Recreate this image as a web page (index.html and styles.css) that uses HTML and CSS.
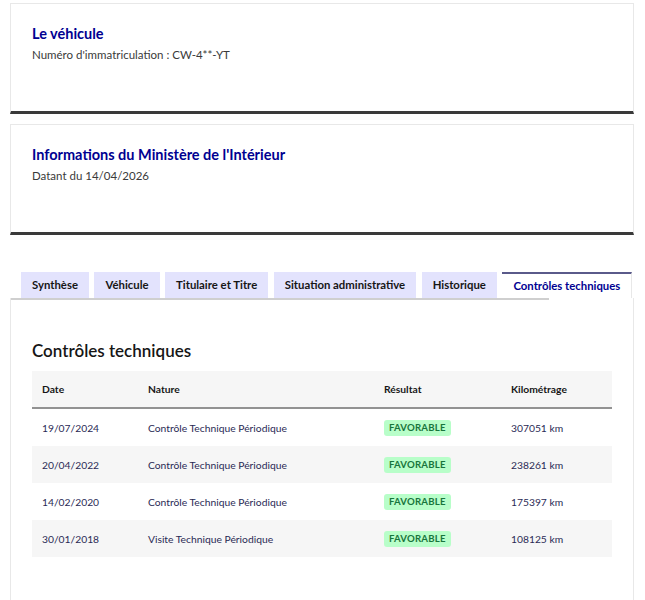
FILE: index.html
```html
<!DOCTYPE html>
<html lang="fr">
<head>
    <meta charset="UTF-8">
    <meta name="viewport" content="width=device-width, initial-scale=1.0">
    <title>Historique du véhicule</title>
    <link rel="stylesheet" href="styles.css">
</head>
<body>
    <div class="card">
        <h2 class="card-title">Le véhicule</h2>
        <p class="card-text">Numéro d'immatriculation : CW-4**-YT</p>
    </div>

    <div class="card">
        <h2 class="card-title">Informations du Ministère de l'Intérieur</h2>
        <p class="card-text">Datant du 14/04/2026</p>
    </div>

    <div class="tabs">
        <ul class="tab-list">
            <li class="tab">Synthèse</li>
            <li class="tab">Véhicule</li>
            <li class="tab">Titulaire et Titre</li>
            <li class="tab">Situation administrative</li>
            <li class="tab">Historique</li>
            <li class="tab active">Contrôles techniques</li>
        </ul>
        <div class="tab-line"></div>

        <div class="tab-panel">
            <h3 class="panel-title">Contrôles techniques</h3>
            <table class="ct-table">
                <thead>
                    <tr>
                        <th class="col-date">Date</th>
                        <th class="col-nature">Nature</th>
                        <th class="col-result">Résultat</th>
                        <th>Kilométrage</th>
                    </tr>
                </thead>
                <tbody>
                    <tr>
                        <td>19/07/2024</td>
                        <td>Contrôle Technique Périodique</td>
                        <td><span class="badge">Favorable</span></td>
                        <td>307051 km</td>
                    </tr>
                    <tr>
                        <td>20/04/2022</td>
                        <td>Contrôle Technique Périodique</td>
                        <td><span class="badge">Favorable</span></td>
                        <td>238261 km</td>
                    </tr>
                    <tr>
                        <td>14/02/2020</td>
                        <td>Contrôle Technique Périodique</td>
                        <td><span class="badge">Favorable</span></td>
                        <td>175397 km</td>
                    </tr>
                    <tr>
                        <td>30/01/2018</td>
                        <td>Visite Technique Périodique</td>
                        <td><span class="badge">Favorable</span></td>
                        <td>108125 km</td>
                    </tr>
                </tbody>
            </table>
        </div>
    </div>
</body>
</html>
```

FILE: styles.css
```css
body {
    font-family: Lato, "Noto Sans", sans-serif;
    margin: 0;
    padding: 3px 11px 0 10px;
    color: #3a3a3a;
    background-color: #fff;
}
.card {
    border: 1px solid #e8e8e8;
    border-bottom: 3px solid #3a3a3a;
    height: 111px;
    box-sizing: border-box;
    padding: 21px 21px 0;
    margin-bottom: 10px;
}
.card-title {
    margin: 0;
    font-size: 14.5px;
    font-weight: bold;
    color: #000091;
}
.card-text {
    margin: 6px 0 0;
    font-size: 11.5px;
    color: #3a3a3a;
}
.tabs {
    margin-top: 37px;
}
.tab-list {
    list-style: none;
    margin: 0;
    padding: 0 0 0 11px;
    display: flex;
    gap: 5.5px;
}
.tab {
    flex: none;
    white-space: nowrap;
    box-sizing: border-box;
    background-color: #e3e3fd;
    color: #161616;
    font-size: 11.35px;
    font-weight: bold;
    padding: 0 11px;
    height: 26px;
    line-height: 26px;
}
.tab.active {
    background-color: #fff;
    color: #000091;
    border-top: 2px solid #5a5a8a;
    border-right: 1px solid #e8e8e8;
    line-height: 24px;
}
.tab-line {
    width: 539px;
    height: 2px;
    background-color: #cfcfcf;
}
.tab-panel {
    border: 1px solid #e8e8e8;
    border-top: none;
    padding: 42px 21px 60px;
    margin-top: -2px;
}
.panel-title {
    margin: 0 0 10px;
    font-size: 17px;
    font-weight: 600;
    color: #161616;
}
.ct-table {
    width: 100%;
    border-collapse: collapse;
    font-size: 10.3px;
    color: #2a2a55;
}
.ct-table th {
    text-align: left;
    font-weight: bold;
    color: #161616;
    background-color: #f6f6f6;
    height: 36px;
    padding: 0 10px;
    border-bottom: 2px solid #929292;
}
.ct-table td {
    height: 37px;
    padding: 0 10px;
}
.ct-table tbody tr:nth-child(even) {
    background-color: #f6f6f6;
}
.col-date {
    width: 86px;
}
.col-nature {
    width: 216px;
}
.col-result {
    width: 107px;
}
.badge {
    display: inline-block;
    vertical-align: middle;
    background-color: #b8fec9;
    color: #18753c;
    font-size: 9.6px;
    font-weight: bold;
    line-height: 12px;
    text-transform: uppercase;
    padding: 2px 5px;
    border-radius: 3px;
    letter-spacing: 0.2px;
}
```
